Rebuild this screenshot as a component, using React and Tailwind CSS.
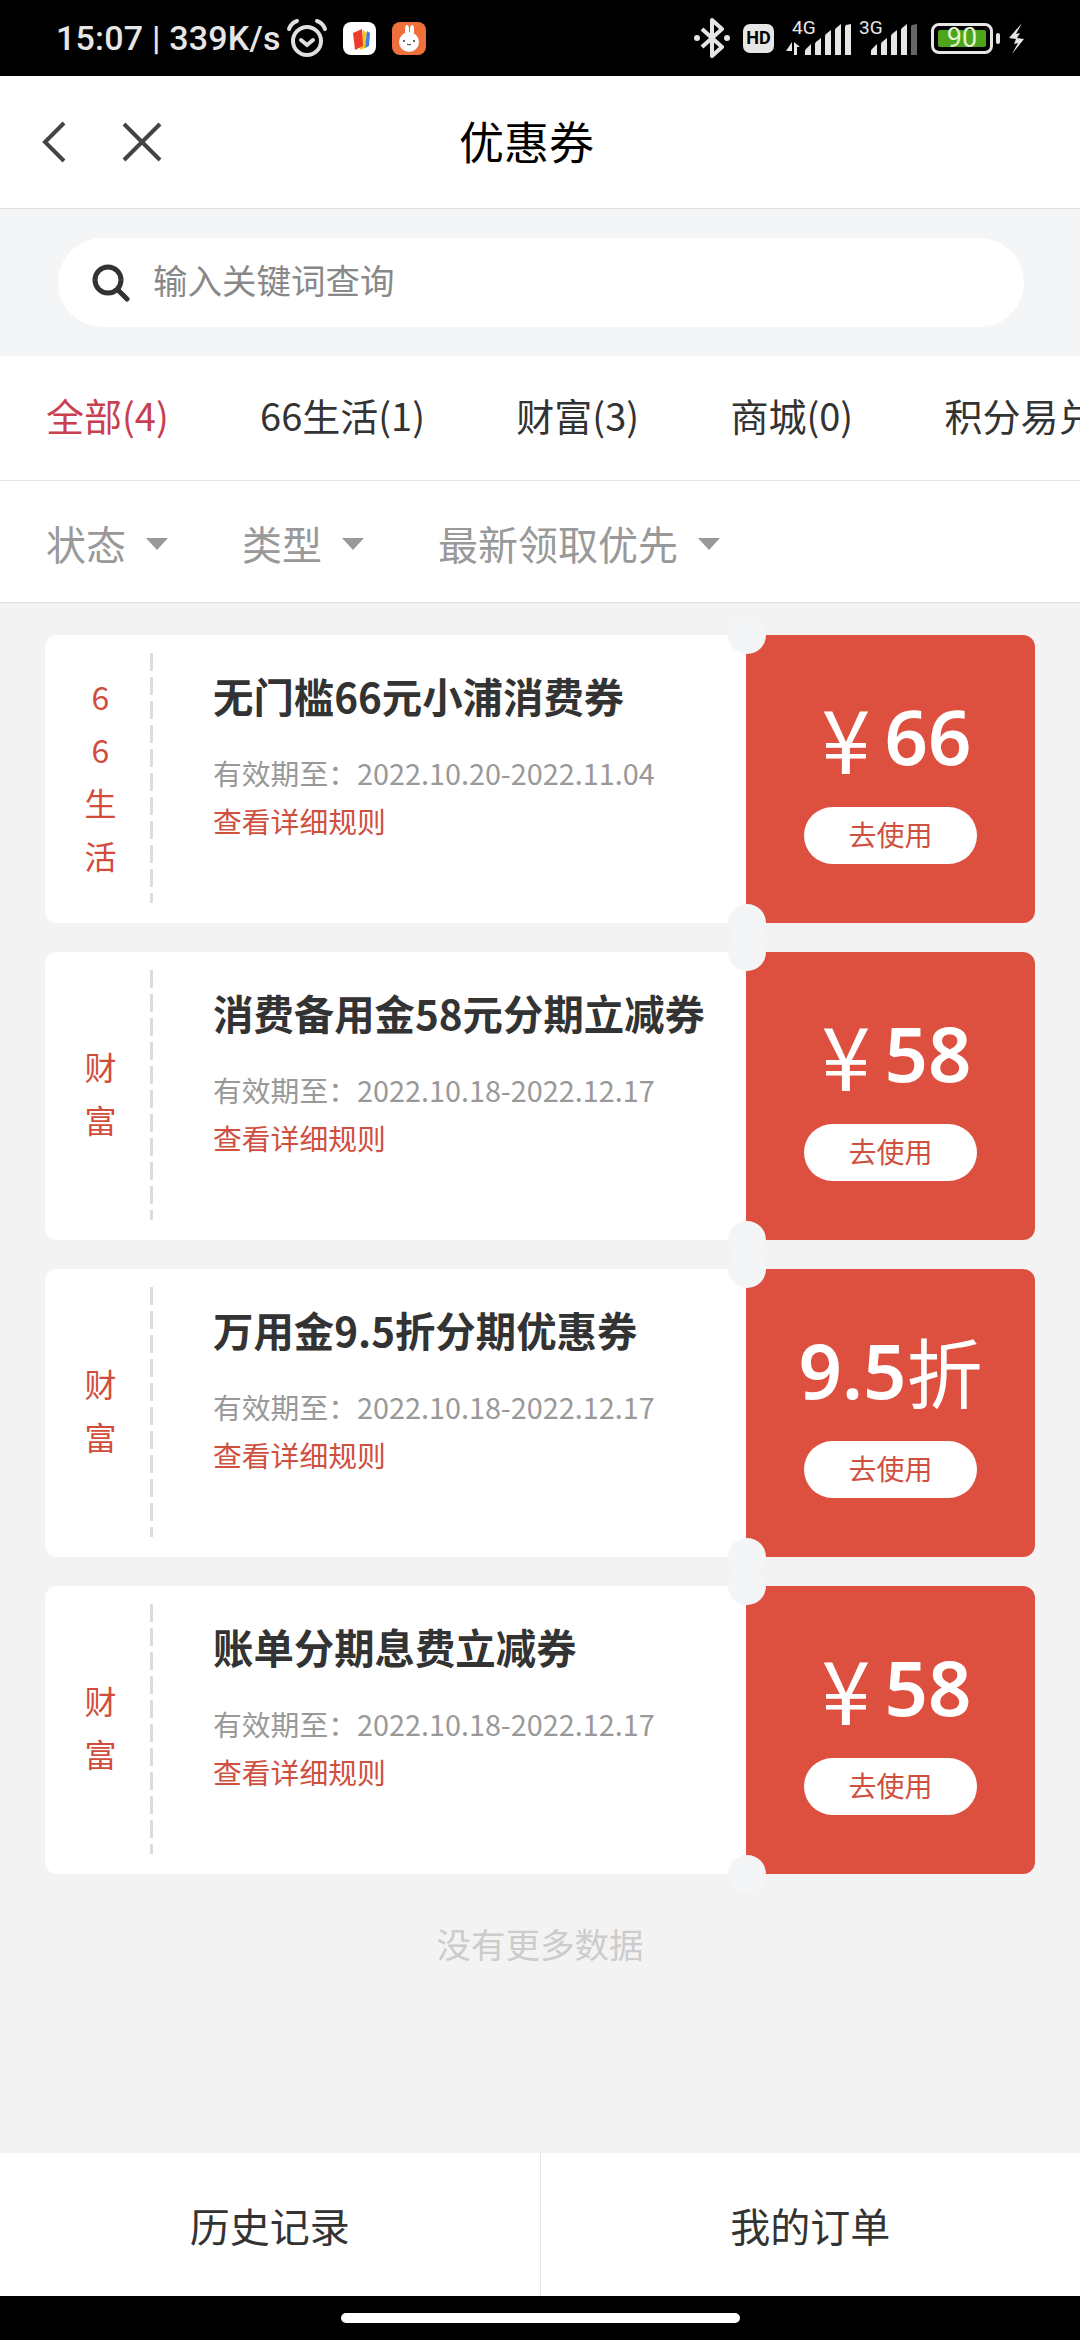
import React from "react";

const tabs = ["全部(4)", "66生活(1)", "财富(3)", "商城(0)", "积分易兑"];
const filters = ["状态", "类型", "最新领取优先"];

const coupons = [
  { tag: ["6", "6", "生", "活"], title: "无门槛66元小浦消费券", date: "2022.10.20-2022.11.04", unit: "¥", value: "66" },
  { tag: ["财", "富"], title: "消费备用金58元分期立减券", date: "2022.10.18-2022.12.17", unit: "¥", value: "58" },
  { tag: ["财", "富"], title: "万用金9.5折分期优惠券", date: "2022.10.18-2022.12.17", value: "9.5", suffix: "折" },
  { tag: ["财", "富"], title: "账单分期息费立减券", date: "2022.10.18-2022.12.17", unit: "¥", value: "58" },
];

const SignalBars = ({ dim }) => (
  <svg width="48" height="31" viewBox="0 0 48 31" fill="#e6e6e6">
    <path d="M1 31v-4q0-1 1-2l5-5v11z" />
    <path d="M11 31v-11q0-1 1-2l5-4v17z" />
    <path d="M21 31V12q0-1 1-2l5-4v25z" />
    <path d="M31 31V6q0-1 1-2l5-4v31z" />
    <path d="M41 31V3q0-1 1-2l5-1v31z" fill={dim ? "#666666" : "#e6e6e6"} />
  </svg>
);

const StatusBar = () => (
  <div className="h-[76px] bg-black flex items-center shrink-0 pl-[56px]">
    <span className="font-['Roboto'] font-medium text-[34px] leading-none text-[#e6e6e6] tracking-[0.2px] w-[232px] whitespace-nowrap">
      15:07 | 339K/s
    </span>
    <svg width="42" height="40" viewBox="0 0 42 40" fill="none" stroke="#e0e0e0" strokeWidth="4" className="-ml-[2px]">
      <circle cx="21" cy="23" r="14" />
      <path d="M15 22l6 5 6-5" strokeLinecap="round" />
      <path d="M3 11q2-6 8-8M39 11q-2-6-8-8" strokeLinecap="round" />
    </svg>
    <svg width="33" height="33" viewBox="0 0 33 33" className="ml-[15px]">
      <rect width="33" height="33" rx="8" fill="#ffffff" />
      <path d="M20 8l4 3-2 15-5 2z" fill="#f5c518" />
      <path d="M24 9l3 2-1 13-4 2z" fill="#3f7fe0" />
      <path d="M10 11l9-4 1 17-8 4z" fill="#ef3b2d" />
    </svg>
    <svg width="34" height="33" viewBox="0 0 34 33" className="ml-[16px]">
      <rect width="34" height="33" rx="8" fill="#f0703c" />
      <ellipse cx="15" cy="8" rx="2" ry="5" fill="#fff" />
      <ellipse cx="20" cy="8" rx="2" ry="5" fill="#fff" />
      <circle cx="17" cy="20" r="10" fill="#fff" />
      <circle cx="12" cy="19" r="1" fill="#333" />
      <circle cx="22" cy="19" r="1" fill="#333" />
      <path d="M15 22q2 2 4 0" stroke="#333" strokeWidth="1" fill="none" />
    </svg>
    <div className="ml-auto flex items-center pr-[54px]">
      <svg width="36" height="40" viewBox="0 0 36 40" fill="none" stroke="#e6e6e6" strokeWidth="4">
        <path d="M8 11l20 18-10 9V2l10 9L8 29" strokeLinejoin="round" />
        <circle cx="3" cy="20" r="3" fill="#e6e6e6" stroke="none" />
        <circle cx="33" cy="20" r="3" fill="#e6e6e6" stroke="none" />
      </svg>
      <div className="ml-[13px] w-[31px] h-[29px] rounded-[7px] bg-[#e6e6e6] flex items-center justify-center font-['Roboto'] font-bold text-[18px] leading-none text-black">
        HD
      </div>
      <div className="relative ml-[12px] w-[66px] h-[34px]">
        <span className="absolute left-[6px] -top-[3px] font-['Roboto'] text-[19px] leading-none text-[#e6e6e6]">4G</span>
        <svg width="14" height="13" viewBox="0 0 14 13" fill="#e6e6e6" className="absolute left-0 bottom-0">
          <path d="M6 0v9H0zM8 13V0l6 5h-3v8z" />
        </svg>
        <div className="absolute left-[18px] bottom-0 flex">
          <SignalBars />
        </div>
      </div>
      <div className="relative ml-[6px] w-[60px] h-[34px]">
        <span className="absolute left-[1px] -top-[3px] font-['Roboto'] text-[19px] leading-none text-[#e6e6e6]">3G</span>
        <div className="absolute left-[12px] bottom-0 flex">
          <SignalBars dim />
        </div>
      </div>
      <div className="ml-[13px] w-[62px] h-[31px] rounded-[8px] border-[3px] border-[#e6e6e6] p-[4px]">
        <div className="w-full h-full rounded-[2px] bg-[#4ea51c] flex items-center justify-center font-['Roboto'] text-[27px] leading-none text-[#dff5d0]">
          90
        </div>
      </div>
      <div className="ml-[3px] w-[4px] h-[11px] rounded-[2px] bg-[#e6e6e6]"></div>
      <svg width="18" height="31" viewBox="0 0 18 31" fill="#e6e6e6" className="ml-[8px]">
        <path d="M14 0L1 15l7 1-2 5 4-1-6 11 12-15-7-1 3-5-4 1z" />
      </svg>
    </div>
  </div>
);

const NavBar = () => (
  <div className="relative h-[133px] bg-white border-b border-[#dedede] flex items-center shrink-0">
    <svg width="24" height="42" viewBox="0 0 24 42" fill="none" stroke="#444444" strokeWidth="4" className="ml-[42px]">
      <path d="M22 2L3 21l19 19" />
    </svg>
    <svg width="40" height="40" viewBox="0 0 40 40" fill="none" stroke="#444444" strokeWidth="4" className="ml-[56px]">
      <path d="M2 2l36 36M38 2L2 38" />
    </svg>
    <span className="absolute left-[459px] top-[42px] text-[45px] leading-none text-black">优惠券</span>
  </div>
);

const SearchBar = () => (
  <div className="h-[147px] bg-[#f4f5f7] flex items-center pl-[58px] pr-[56px] shrink-0">
    <div className="w-full h-[89px] rounded-full bg-white flex items-center pl-[34px]">
      <svg width="38" height="38" viewBox="0 0 38 38" fill="none" stroke="#333333" strokeWidth="5" strokeLinecap="round">
        <circle cx="16" cy="16" r="13" />
        <path d="M26 26l9 9" />
      </svg>
      <span className="ml-[23px] pb-[6px] text-[34.5px] leading-none text-[#888888]">输入关键词查询</span>
    </div>
  </div>
);

const Tabs = () => (
  <div className="h-[125px] pb-[7px] bg-white border-b border-[#e4e4e4] flex items-center gap-[91.3px] pl-[46px] overflow-hidden shrink-0">
    {tabs.map((t, i) => (
      <span
        key={t}
        className={
          i === 0
            ? "text-[38px] leading-none whitespace-nowrap text-[#c8404f]"
            : "text-[38px] leading-none whitespace-nowrap text-[#333333]"
        }
      >
        {t}
      </span>
    ))}
  </div>
);

const Filters = () => (
  <div className="h-[122px] bg-white border-b border-[#e0e0e0] flex items-center gap-[74px] pl-[46px] shrink-0">
    {filters.map((f) => (
      <div key={f} className="flex items-center gap-[20px]">
        <span className="pt-[2px] text-[40px] leading-none text-[#999999]">{f}</span>
        <div className="mt-[5px] w-0 h-0 border-x-[11px] border-x-transparent border-t-[12px] border-t-[#999999]"></div>
      </div>
    ))}
  </div>
);

const CouponCard = ({ coupon }) => (
  <div className="flex h-[288px]">
    <div className="w-[701px] rounded-[12px] bg-white flex">
      <div className="w-[105px] pl-[6px] pb-[7px] flex flex-col items-center justify-center text-[32px] leading-[53px] text-[#d24c3c]">
        {coupon.tag.map((c, i) => (
          <span key={i}>{c}</span>
        ))}
      </div>
      <div className="w-[3px] mt-[18px] mb-[20px] bg-[repeating-linear-gradient(to_bottom,#dcdcdc_0,#dcdcdc_18px,transparent_18px,transparent_24px)]"></div>
      <div className="pl-[60px] pt-[36px]">
        <div className="text-[40.4px] leading-[50px] font-bold text-[#333333] whitespace-nowrap">{coupon.title}</div>
        <div className="mt-[32px] text-[28.8px] leading-[40px] text-[#999999] whitespace-nowrap">
          有效期至：{coupon.date}
        </div>
        <div className="mt-[8px] text-[28.8px] leading-[40px] text-[#d0503f]">查看详细规则</div>
      </div>
    </div>
    <div className="relative w-[289px] rounded-r-[12px] bg-[#dd4f3f] flex flex-col items-center">
      <div className="absolute -left-[18px] -top-[19px] w-[38px] h-[38px] rounded-full bg-[#f4f5f7]"></div>
      <div className="absolute -left-[18px] -bottom-[19px] w-[38px] h-[38px] rounded-full bg-[#f4f5f7]"></div>
      <div className="mt-[60px] h-[82px] flex items-center font-['Noto_Sans','Noto_Sans_CJK_SC',sans-serif] text-[76px] leading-none font-semibold text-white whitespace-nowrap">
        {coupon.unit && <span className="ml-[12px] mr-[14px] text-[88px] font-['Noto_Sans_CJK_SC'] font-normal">{coupon.unit}</span>}
        {coupon.value}
        {coupon.suffix && <span className="font-['Noto_Sans_CJK_SC'] font-normal">{coupon.suffix}</span>}
      </div>
      <div className="mt-[30px] pb-[3px] w-[173px] h-[57px] rounded-full bg-white flex items-center justify-center text-[28px] leading-none text-[#d0503f]">
        去使用
      </div>
    </div>
  </div>
);

const App = () => (
  <div className="w-[1080px] h-[2340px] overflow-hidden flex flex-col bg-[#f3f3f3] font-['Noto_Sans_CJK_SC','Roboto',sans-serif]">
    <StatusBar />
    <NavBar />
    <SearchBar />
    <Tabs />
    <Filters />
    <div className="flex-1 px-[45px] pt-[32px]">
      <div className="flex flex-col gap-[29px]">
        {coupons.map((c, i) => (
          <CouponCard key={i} coupon={c} />
        ))}
      </div>
      <div className="mt-[51px] text-center text-[34.5px] leading-[36px] text-[#cccccc]">没有更多数据</div>
    </div>
    <div className="h-[143px] bg-white flex shrink-0">
      <div className="flex-1 border-r border-[#e4e4e4] flex items-center justify-center text-[40px] leading-none text-[#333333]">
        历史记录
      </div>
      <div className="flex-1 flex items-center justify-center text-[40px] leading-none text-[#333333]">我的订单</div>
    </div>
    <div className="h-[44px] bg-black flex justify-center pt-[17px] shrink-0">
      <div className="w-[399px] h-[10px] rounded-full bg-white"></div>
    </div>
  </div>
);

export default App;
